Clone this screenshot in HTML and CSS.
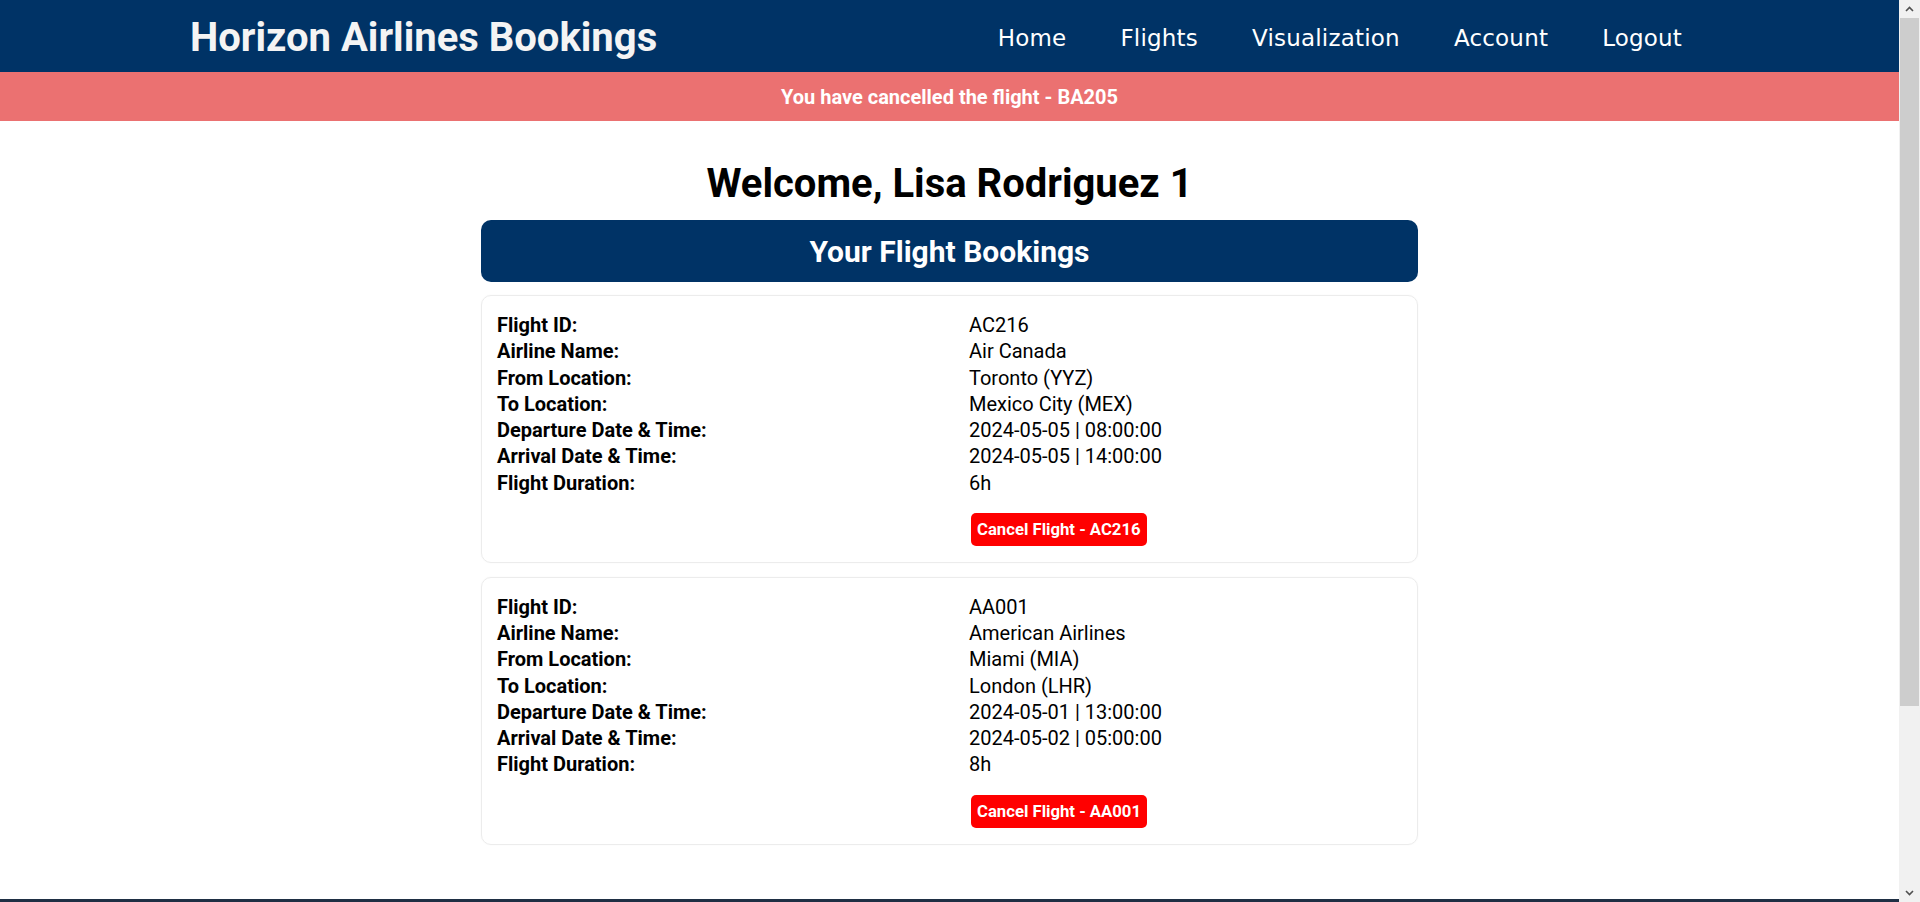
FILE: index.html
```html
<!DOCTYPE html>
<html lang="en">
<head>
<meta charset="utf-8">
<title>Horizon Airlines Bookings</title>
<link rel="stylesheet" href="styles.css">
</head>
<body>
<header class="site-header">
  <div class="header-inner">
    <div class="brand">Horizon Airlines Bookings</div>
    <nav class="nav">
      <a href="#">Home</a>
      <a href="#">Flights</a>
      <a href="#">Visualization</a>
      <a href="#">Account</a>
      <a href="#">Logout</a>
    </nav>
  </div>
</header>
<div class="flash">You have cancelled the flight - BA205</div>
<main class="main">
  <h1 class="welcome">Welcome, Lisa Rodriguez 1</h1>
  <h2 class="section-title">Your Flight Bookings</h2>
  <div class="cards">
    <div class="card">
      <div class="row"><span class="label">Flight ID:</span><span class="value">AC216</span></div>
      <div class="row"><span class="label">Airline Name:</span><span class="value">Air Canada</span></div>
      <div class="row"><span class="label">From Location:</span><span class="value">Toronto (YYZ)</span></div>
      <div class="row"><span class="label">To Location:</span><span class="value">Mexico City (MEX)</span></div>
      <div class="row"><span class="label">Departure Date &amp; Time:</span><span class="value">2024-05-05 | 08:00:00</span></div>
      <div class="row"><span class="label">Arrival Date &amp; Time:</span><span class="value">2024-05-05 | 14:00:00</span></div>
      <div class="row"><span class="label">Flight Duration:</span><span class="value">6h</span></div>
      <div class="row actions"><span></span><span><button class="cancel">Cancel Flight - AC216</button></span></div>
    </div>
    <div class="card">
      <div class="row"><span class="label">Flight ID:</span><span class="value">AA001</span></div>
      <div class="row"><span class="label">Airline Name:</span><span class="value">American Airlines</span></div>
      <div class="row"><span class="label">From Location:</span><span class="value">Miami (MIA)</span></div>
      <div class="row"><span class="label">To Location:</span><span class="value">London (LHR)</span></div>
      <div class="row"><span class="label">Departure Date &amp; Time:</span><span class="value">2024-05-01 | 13:00:00</span></div>
      <div class="row"><span class="label">Arrival Date &amp; Time:</span><span class="value">2024-05-02 | 05:00:00</span></div>
      <div class="row"><span class="label">Flight Duration:</span><span class="value">8h</span></div>
      <div class="row actions"><span></span><span><button class="cancel">Cancel Flight - AA001</button></span></div>
    </div>
  </div>
</main>
<footer class="site-footer"></footer>
<div class="scrollbar" aria-hidden="true">
  <div class="sb-arrow">
    <svg width="9" height="6" viewBox="0 0 9 6"><path d="M1 5 L4.5 1.5 L8 5" fill="none" stroke="#505050" stroke-width="1.6"/></svg>
  </div>
  <div class="sb-track">
    <div class="sb-thumb"></div>
  </div>
  <div class="sb-arrow">
    <svg width="9" height="6" viewBox="0 0 9 6"><path d="M1 1 L4.5 4.5 L8 1" fill="none" stroke="#505050" stroke-width="1.6"/></svg>
  </div>
</div>
</body>
</html>
```
FILE: styles.css
```css
html, body {
  margin: 0;
  padding: 0;
}
body {
  font-family: Roboto, "Liberation Sans", Arial, sans-serif;
  font-size: 20px;
  color: #000;
  background: #fff;
  margin-right: 21px;
}
.site-header {
  background: #003366;
  height: 72px;
}
.header-inner {
  width: 80%;
  height: 100%;
  margin: 0 auto;
  display: flex;
  align-items: center;
  justify-content: space-between;
}
.brand {
  font-family: Roboto, "Liberation Sans", sans-serif;
  font-weight: 700;
  font-size: 40px;
  color: #f4f4f4;
  line-height: 1;
  padding-top: 3px;
}
.nav {
  display: flex;
  align-items: center;
  padding-top: 4px;
}
.nav a {
  font-family: "DejaVu Sans", Verdana, sans-serif;
  font-size: 23px;
  letter-spacing: 0.2px;
  color: #ffffff;
  text-decoration: none;
  padding: 0 27px;
}
.flash {
  background: #eb7171;
  color: #ffffff;
  font-weight: 700;
  font-size: 20px;
  height: 49px;
  display: flex;
  align-items: center;
  justify-content: center;
}
.main {
  width: 937px;
  margin: 0 auto;
  padding-bottom: 54px;
  display: flex;
  flex-direction: column;
}
.welcome {
  font-size: 40px;
  font-weight: 700;
  text-align: center;
  margin: 39px 0 13px;
  line-height: 47px;
}
.section-title {
  background: #003366;
  color: #ffffff;
  font-size: 30px;
  font-weight: 700;
  text-align: center;
  margin: 0 0 13px;
  border-radius: 10px;
  height: 62px;
  display: flex;
  align-items: center;
  justify-content: center;
}
.cards {
  display: flex;
  flex-direction: column;
  gap: 14px;
}
.card {
  border: 1px solid #ececec;
  border-radius: 10px;
  padding: 16px 15px 16px;
  box-shadow: 0 0 2px rgba(0,0,0,0.04);
}
.row {
  display: grid;
  grid-template-columns: 472px 1fr;
  line-height: 26.25px;
}
.label {
  font-weight: 700;
}
.actions {
  margin-top: 17px;
}
.cancel {
  font-family: Roboto, "Liberation Sans", sans-serif;
  font-weight: 700;
  font-size: 16.7px;
  color: #ffffff;
  background: #ff0000;
  border: none;
  border-radius: 5px;
  padding: 7px 6px;
  margin-left: 2px;
  line-height: 19px;
  display: block;
}
.site-footer {
  background: #1f2f44;
  min-height: 1090px;
}
.scrollbar {
  position: fixed;
  top: 0;
  right: 0;
  bottom: 0;
  width: 21px;
  background: #f1f1f1;
  display: flex;
  flex-direction: column;
}
.sb-arrow {
  height: 18px;
  display: flex;
  align-items: center;
  justify-content: center;
}
.sb-track {
  flex: 1;
  display: flex;
  flex-direction: column;
}
.sb-thumb {
  height: 688px;
  background: #cdcdcd;
  margin: 0 1px;
}
```
